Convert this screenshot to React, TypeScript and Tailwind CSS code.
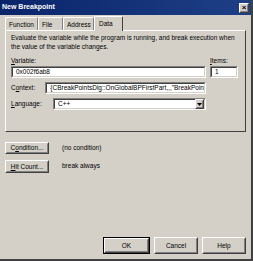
import React from "react";

const font = { fontFamily: '"Liberation Sans", Arial, sans-serif' };

function Raised({ children, className = "" }: { children?: React.ReactNode; className?: string }) {
  return (
    <div className={`border border-t-white border-l-white border-r-[#404040] border-b-[#404040] bg-[#d4d0c8] ${className}`}>
      <div className="flex h-full w-full items-center justify-center border border-transparent border-r-[#808080] border-b-[#808080]">
        {children}
      </div>
    </div>
  );
}

function Sunken({ children, className = "" }: { children?: React.ReactNode; className?: string }) {
  return (
    <div className={`border border-t-[#808080] border-l-[#808080] border-r-white border-b-white ${className}`}>
      <div className="flex h-full w-full items-center border border-t-[#404040] border-l-[#404040] border-r-[#d4d0c8] border-b-[#d4d0c8] bg-white pl-[3px]">
        {children}
      </div>
    </div>
  );
}

const tabs = ["Function", "File", "Address", "Data"];

export default function App() {
  return (
    <div
      className="flex h-[261px] w-[253px] flex-col border-r-2 border-b-2 border-r-[#404040] border-b-[#404040] bg-[#d4d0c8] text-[6.5px] text-black"
      style={font}
    >
      {/* title bar */}
      <div className="flex h-[15px] items-center justify-between bg-gradient-to-r from-[#0a246a] to-[#1e3f86] pl-[2px] pr-[2px]">
        <span className="text-[7px] font-bold text-white">New Breakpoint</span>
        <Raised className="h-[10px] w-[10px]">
          <span className="text-[8px] font-bold leading-none">×</span>
        </Raised>
      </div>

      {/* tabs */}
      <div className="ml-[5px] mt-[2px] flex h-[13px] items-end">
        {tabs.map((t) =>
          t === "Data" ? (
            <div
              key={t}
              className="relative z-10 -mb-px flex h-[15px] w-[29px] items-start rounded-t-[2px] border border-b-0 border-t-white border-l-white border-r-[#404040] bg-[#d4d0c8] pl-[4px] pt-[2px]"
            >
              {t}
            </div>
          ) : (
            <div
              key={t}
              className={`flex h-[13px] items-start rounded-t-[2px] border border-b-0 border-t-white border-l-white border-r-[#808080] pl-[3px] pt-[2px] ${
                t === "Function" ? "w-[33px]" : t === "File" ? "w-[25px]" : "w-[31px]"
              }`}
            >
              {t}
            </div>
          )
        )}
      </div>

      {/* tab panel */}
      <div className="mx-[5px] flex h-[102px] flex-col border border-t-white border-l-white border-r-[#404040] border-b-[#404040] px-[5px] pt-[3px]">
        <p className="leading-[8.5px]">
          Evaluate the variable while the program is running, and break execution when the value of the variable changes.
        </p>
        <div className="mt-[6px] flex gap-[4px]">
          <div className="flex w-[195px] flex-col">
            <span className="leading-[8px]">
              <u>V</u>ariable:
            </span>
            <Sunken className="mt-[1px] h-[12px]">0x002f6ab8</Sunken>
          </div>
          <div className="flex w-[28px] flex-col">
            <span className="leading-[8px]">
              <u>I</u>tems:
            </span>
            <Sunken className="mt-[1px] h-[12px]">1</Sunken>
          </div>
        </div>
        <div className="mt-[4px] flex w-[195px] items-center">
          <span className="w-[42px]">
            C<u>o</u>ntext:
          </span>
          <Sunken className="h-[12px] flex-1">
            <span className="overflow-hidden whitespace-nowrap">{"{CBreakPointsDlg::OnGlobalBPFirstPart,,,\"BreakPoin"}</span>
          </Sunken>
        </div>
        <div className="mt-[4px] flex w-[195px] items-center">
          <span className="w-[42px]">
            <u>L</u>anguage:
          </span>
          <Sunken className="h-[12px] flex-1">
            <span className="flex-1">C++</span>
            <Raised className="h-[10px] w-[9px]">
              <svg width="5" height="3" viewBox="0 0 5 3">
                <path d="M0 0h5L2.5 3z" fill="#000" />
              </svg>
            </Raised>
          </Sunken>
        </div>
      </div>

      {/* condition / hit count */}
      <div className="ml-[5px] mt-[10px] flex items-start gap-[13px]">
        <Raised className="h-[12px] w-[44px]">
          <span>
            C<u>o</u>ndition...
          </span>
        </Raised>
        <span className="mt-[1px]">(no condition)</span>
      </div>
      <div className="ml-[5px] mt-[6px] flex items-start gap-[13px]">
        <Raised className="h-[13px] w-[44px]">
          <span>
            <u>H</u>it Count...
          </span>
        </Raised>
        <span className="mt-[1px]">break always</span>
      </div>

      {/* footer buttons */}
      <div className="mt-auto mb-[5px] mr-[5px] flex justify-end gap-[4px]">
        <div className="border border-black">
          <Raised className="h-[15px] w-[45px]">OK</Raised>
        </div>
        <Raised className="h-[17px] w-[44px]">Cancel</Raised>
        <Raised className="h-[17px] w-[44px]">Help</Raised>
      </div>
    </div>
  );
}
